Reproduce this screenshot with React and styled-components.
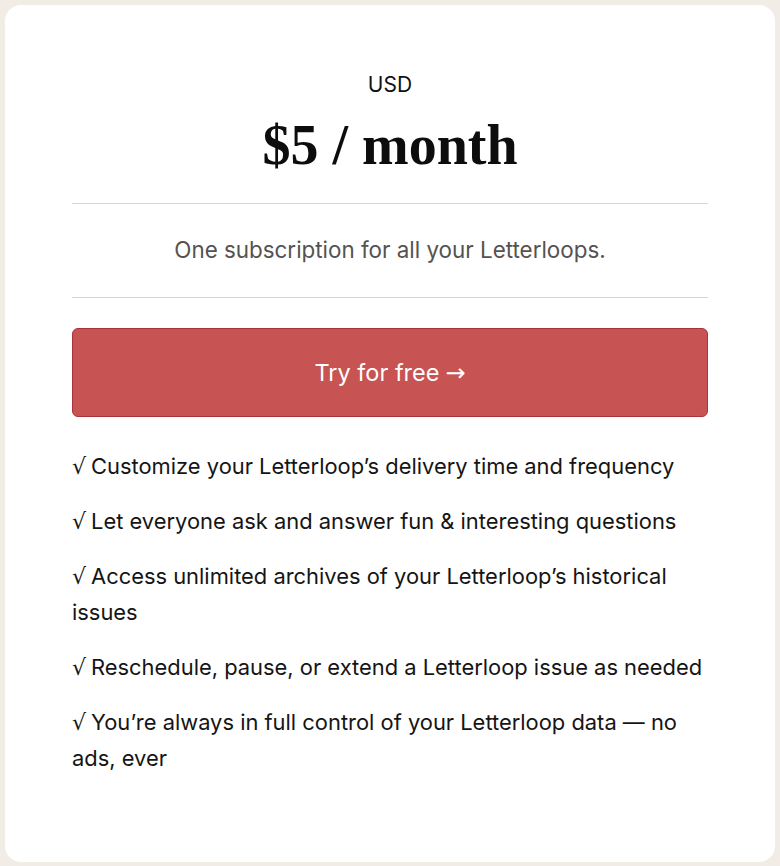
import styled, { createGlobalStyle } from "styled-components";

const GlobalStyle = createGlobalStyle`
  html, body {
    margin: 0;
    background: #f1ece6;
  }
  body {
    padding: 5px;
    font-family: "Inter", "Liberation Sans", sans-serif;
  }
`;

const Card = styled.div`
  box-sizing: border-box;
  height: 857px;
  background: #ffffff;
  border-radius: 16px;
  padding: 66px 67px 0;
  display: flex;
  flex-direction: column;
`;

const Currency = styled.div`
  text-align: center;
  font-size: 21px;
  line-height: 28px;
  color: #111;
`;

const Price = styled.h1`
  margin: 13px 0 0;
  text-align: center;
  font-family: "Liberation Serif", "Times New Roman", serif;
  font-weight: 700;
  font-size: 56px;
  line-height: 67px;
  color: #0d0d0d;
`;

const Divider = styled.hr`
  margin: ${(p) => p.$top || 24}px 0 0;
  border: 0;
  border-top: 1px solid #d8d6d3;
`;

const Tagline = styled.p`
  margin: 32px 0 0;
  text-align: center;
  font-size: 22.4px;
  line-height: 28px;
  color: #555350;
`;

const TryButton = styled.button`
  margin-top: 30px;
  height: 89px;
  width: 100%;
  background: #c75353;
  border: 1px solid #a8343a;
  border-radius: 6px;
  color: #fff;
  font-family: inherit;
  font-size: 23.5px;
  cursor: pointer;
`;

const Arrow = styled.span`
  font-family: "DejaVu Sans", sans-serif;
  font-size: 24px;
  line-height: 1;
  margin-left: 6px;
`;

const Features = styled.ul`
  list-style: none;
  margin: 31px -8px 0 0;
  padding: 0;
  display: flex;
  flex-direction: column;
  gap: 19px;
`;

const Feature = styled.li`
  font-size: 21.9px;
  line-height: 36px;
  color: #151515;
`;

const Check = styled.span`
  font-family: "DejaVu Sans", sans-serif;
  font-size: 22px;
  line-height: 1;
  margin-right: 5px;
`;

const features = [
  "Customize your Letterloop’s delivery time and frequency",
  "Let everyone ask and answer fun & interesting questions",
  "Access unlimited archives of your Letterloop’s historical issues",
  "Reschedule, pause, or extend a Letterloop issue as needed",
  "You’re always in full control of your Letterloop data — no ads, ever",
];

export default function App() {
  return (
    <>
      <GlobalStyle />
      <Card>
        <Currency>USD</Currency>
        <Price>$5 / month</Price>
        <Divider $top={24} />
        <Tagline>One subscription for all your Letterloops.</Tagline>
        <Divider $top={33} />
        <TryButton>
          Try for free<Arrow>→</Arrow>
        </TryButton>
        <Features>
          {features.map((f) => (
            <Feature key={f}>
              <Check>√</Check>
              {f}
            </Feature>
          ))}
        </Features>
      </Card>
    </>
  );
}
